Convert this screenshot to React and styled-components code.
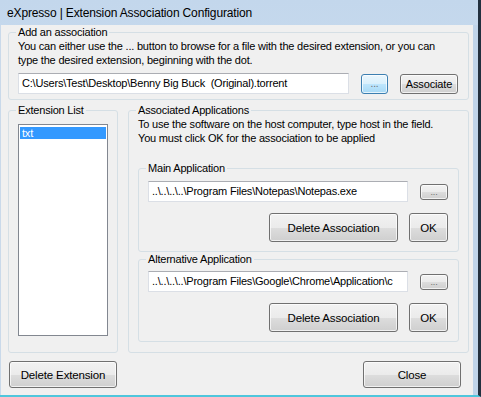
import React from 'react'
import styled, { createGlobalStyle } from 'styled-components'

const GlobalStyle = createGlobalStyle`
  html, body { margin: 0; padding: 0; background: #f0f0f0; }
  body { font-family: "Liberation Sans", Arial, sans-serif; font-size: 11px; color: #000; letter-spacing: -0.2px; }
`;

const Window = styled.div`
  width: 481px;
  height: 397px;
  box-sizing: border-box;
  display: flex;
  flex-direction: column;
  border-right: 3px solid #22303f;
  border-bottom: 2px solid #4fc6dc;
  background: linear-gradient(180deg, #c3d7ec 0%, #d2e1f1 60%, #d9e6f3 100%);
`;

const TitleBar = styled.div`
  height: 25px;
  flex: none;
  display: flex;
  align-items: center;
  padding-left: 7px;
  font-family: "Liberation Sans", Arial, sans-serif;
  font-size: 12px;
  letter-spacing: -0.15px;
  color: #000;
`;

const Client = styled.div`
  flex: 1;
  display: flex;
  flex-direction: column;
  background: #f0f0f0;
  border-left: 1px solid #c9d9ea;
  border-right: 5px solid #bfd4ea;
  padding: 1px 4px 0 7px;
`;

const Group = styled.fieldset`
  margin: ${p => p.$mt || 0}px 0 0 0;
  padding: 0 ${p => p.$pr ?? 9}px ${p => p.$pb || 0}px 9px;
  border: 1px solid #d5dfe5;
  border-radius: 3px;
  min-width: 0;
  width: ${p => p.$w ? `${p.$w}px` : 'auto'};
  box-sizing: border-box;
  display: flex;
  flex-direction: column;
`;

const Legend = styled.legend`
  padding: 0 2px;
  margin-left: -2px;
  line-height: 13px;
  height: 13px;
`;

const Text = styled.div`
  line-height: 14px;
  white-space: nowrap;
`;

const Row = styled.div`
  display: flex;
  align-items: center;
  justify-content: ${p => p.$justify || 'flex-start'};
  gap: ${p => p.$gap || 0}px;
  margin-top: ${p => p.$mt || 0}px;
`;

const TextBox = styled.div`
  box-sizing: border-box;
  width: ${p => p.$w}px;
  height: 21px;
  flex: none;
  background: #fff;
  border: 1px solid #dbdfe6;
  border-top-color: #abadb3;
  padding: 0 3px;
  line-height: 19px;
  white-space: nowrap;
  overflow: hidden;
`;

const Button = styled.button`
  box-sizing: border-box;
  width: ${p => p.$w}px;
  height: ${p => p.$h}px;
  flex: none;
  margin: 0;
  padding: 0;
  font-family: inherit;
  font-size: ${p => p.$fs || 11}px;
  letter-spacing: -0.15px;
  color: ${p => p.$muted ? '#6d6d6d' : '#000'};
  border: 1px solid ${p => p.$focus ? '#3c7fb1' : '#707070'};
  border-radius: 3px;
  background: ${p => p.$focus
    ? 'linear-gradient(180deg, #eaf6fd 0%, #d9f0fc 50%, #bee6fd 51%, #a7d9f5 100%)'
    : 'linear-gradient(180deg, #f2f2f2 0%, #ebebeb 50%, #dddddd 51%, #cfcfcf 100%)'};
  box-shadow: inset 0 0 0 1px rgba(255,255,255,0.7);
`;

const ListBox = styled.div`
  box-sizing: border-box;
  width: 90px;
  height: 212px;
  margin-top: 7px;
  background: #fff;
  border: 1px solid #828790;
  padding: 2px 1px;
`;

const ListItem = styled.div`
  height: 12px;
  line-height: 12px;
  padding-left: 2px;
  background: ${p => p.$selected ? '#3399ff' : 'transparent'};
  color: ${p => p.$selected ? '#fff' : '#000'};
`;

const Columns = styled.div`
  display: flex;
  gap: 10px;
  margin-top: 4px;
  height: 249px;
`;

const Footer = styled.div`
  display: flex;
  justify-content: space-between;
  margin-top: 8px;
  padding: 0 8px 0 1px;
`;

function AppGroup({ legend, path, mt, inputMt }) {
  return (
    <Group $mt={mt} $pb={9} $pr={10}>
      <Legend>{legend}</Legend>
      <Row $mt={inputMt} $gap={12}>
        <TextBox $w={260}>{path}</TextBox>
        <Button $w={28} $h={16} $fs={9} $muted>...</Button>
      </Row>
      <Row $mt={11} $gap={11} $justify="flex-end">
        <Button $w={129} $h={29} $fs={11.5}>Delete Association</Button>
        <Button $w={39} $h={29} $fs={11.5}>OK</Button>
      </Row>
    </Group>
  )
}

export default function App() {
  return (
    <>
      <GlobalStyle />
      <Window>
        <TitleBar>eXpresso | Extension Association Configuration</TitleBar>
        <Client>
          <Group $pb={5}>
            <Legend>Add an association</Legend>
            <Text>You can either use the ... button to browse for a file with the desired extension, or you can</Text>
            <Text>type the desired extension, beginning with the dot.</Text>
            <Row $mt={6} $gap={12}>
              <TextBox $w={331}>C:\Users\Test\Desktop\Benny Big Buck&nbsp; (Original).torrent</TextBox>
              <Button $w={27} $h={20} $focus $fs={10} $muted>...</Button>
              <Button $w={58} $h={20} $fs={11}>Associate</Button>
            </Row>
          </Group>
          <Columns>
            <Group $w={110}>
              <Legend>Extension List</Legend>
              <ListBox>
                <ListItem $selected>txt</ListItem>
              </ListBox>
            </Group>
            <Group $w={341}>
              <Legend>Associated Applications</Legend>
              <Text>To use the software on the host computer, type host in the field.</Text>
              <Text>You must click OK for the association to be applied</Text>
              <AppGroup legend="Main Application" path="..\..\..\..\Program Files\Notepas\Notepas.exe" mt={17} inputMt={6} />
              <AppGroup legend="Alternative Application" path="..\..\..\..\Program Files\Google\Chrome\Application\c" mt={1} inputMt={5} />
            </Group>
          </Columns>
          <Footer>
            <Button $w={108} $h={27} $fs={11.5}>Delete Extension</Button>
            <Button $w={98} $h={27} $fs={11.5}>Close</Button>
          </Footer>
        </Client>
      </Window>
    </>
  )
}
